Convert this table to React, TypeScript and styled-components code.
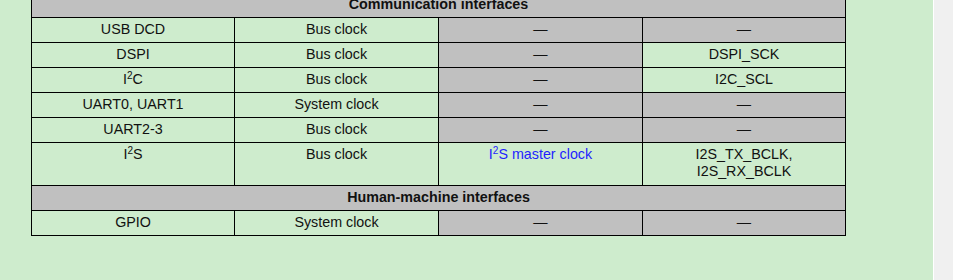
import styled, { createGlobalStyle } from "styled-components";

const GlobalStyle = createGlobalStyle`
    html, body {
        margin: 0;
        padding: 0;
        background: #f0f0f0;
    }
    body {
        font-family: "Liberation Sans", Arial, sans-serif;
        overflow: hidden;
    }
`;

const Page = styled.div`
    display: flex;
    height: 280px;
`;

const Content = styled.div`
    width: 933px;
    background: #ceeccd;
    overflow: hidden;
`;

const ScrollTrack = styled.div`
    flex: 1;
    border-left: 1px solid #ffffff;
    background: #f0f0f0;
`;

const Grid = styled.div`
    display: grid;
    grid-template-columns: 203px 204px 204px 203px;
    width: 815px;
    margin: -8px 0 0 31px;
    border-top: 1px solid #000;
    border-left: 1px solid #000;
    box-sizing: border-box;
`;

const Cell = styled.div<{ $grey?: boolean; $tall?: boolean; $link?: boolean }>`
    box-sizing: border-box;
    height: ${p => (p.$tall ? 43 : 25)}px;
    padding-top: 3px;
    border-right: 1px solid #000;
    border-bottom: 1px solid #000;
    background: ${p => (p.$grey ? '#c0c0c0' : '#ceeccd')};
    color: ${p => (p.$link ? '#1f1fff' : '#111')};
    font-size: 14.3px;
    line-height: 17px;
    text-align: center;

    sup {
        font-size: 10px;
        line-height: 0;
        vertical-align: 5px;
    }
`;

const Section = styled(Cell)`
    grid-column: 1 / -1;
    background: #c0c0c0;
    font-weight: bold;
`;

const DASH = '—';

type Row = {
    module: React.ReactNode;
    clock: string;
    master?: React.ReactNode;
    pin?: React.ReactNode;
    tall?: boolean;
};

const communication: Row[] = [
    { module: 'USB DCD', clock: 'Bus clock' },
    { module: 'DSPI', clock: 'Bus clock', pin: 'DSPI_SCK' },
    { module: <>I<sup>2</sup>C</>, clock: 'Bus clock', pin: 'I2C_SCL' },
    { module: 'UART0, UART1', clock: 'System clock' },
    { module: 'UART2-3', clock: 'Bus clock' },
    {
        module: <>I<sup>2</sup>S</>,
        clock: 'Bus clock',
        master: <>I<sup>2</sup>S master clock</>,
        pin: <>I2S_TX_BCLK,<br />I2S_RX_BCLK</>,
        tall: true,
    },
];

const humanMachine: Row[] = [
    { module: 'GPIO', clock: 'System clock' },
];

function ClockRow({ row }: { row: Row }) {
    return (
        <>
            <Cell $tall={row.tall}>{row.module}</Cell>
            <Cell $tall={row.tall}>{row.clock}</Cell>
            <Cell $tall={row.tall} $grey={!row.master} $link={!!row.master}>{row.master ?? DASH}</Cell>
            <Cell $tall={row.tall} $grey={!row.pin}>{row.pin ?? DASH}</Cell>
        </>
    );
}

export default function App() {
    return (
        <>
            <GlobalStyle />
            <Page>
                <Content>
                    <Grid>
                        <Section>Communication interfaces</Section>
                        {communication.map((r, i) => <ClockRow key={'c' + i} row={r} />)}
                        <Section>Human-machine interfaces</Section>
                        {humanMachine.map((r, i) => <ClockRow key={'h' + i} row={r} />)}
                    </Grid>
                </Content>
                <ScrollTrack />
            </Page>
        </>
    );
}
